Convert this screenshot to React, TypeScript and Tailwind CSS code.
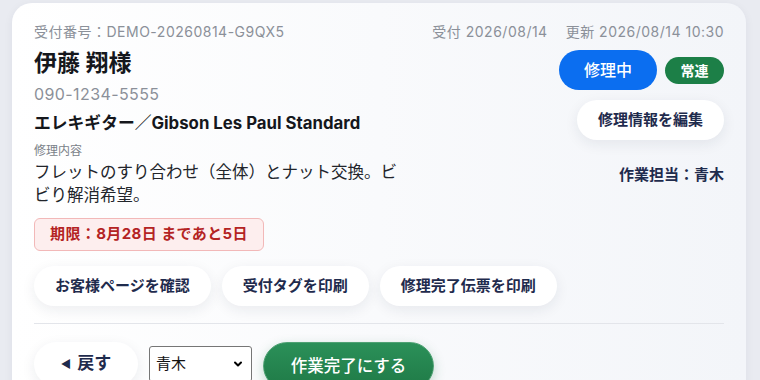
import { ChevronDown } from "lucide-react";

const font = { fontFamily: 'Inter, "Noto Sans CJK JP", sans-serif' };

function PillButton({ children }: { children: React.ReactNode }) {
  return (
    <button className="h-10 px-[21px] rounded-full bg-white text-[15px] font-semibold text-[#1f2b4d] shadow-[0_4px_14px_rgba(30,40,70,0.08)] whitespace-nowrap">
      {children}
    </button>
  );
}

export default function App() {
  return (
    <div className="min-h-screen bg-[#e9ebf1] pl-3 pr-[14px] pt-[3px]" style={font}>
      <div className="rounded-[20px] bg-gradient-to-r from-white to-[#f3f5f9] shadow-[0_2px_10px_rgba(30,40,70,0.06)] px-[22px] pt-5 pb-8">
        {/* meta row */}
        <div className="flex justify-between text-[14px] leading-[18px] tracking-[0.5px] text-[#8b9099]">
          <span>受付番号：DEMO-20260814-G9QX5</span>
          <div className="flex gap-[18px]">
            <span>受付 2026/08/14</span>
            <span>更新 2026/08/14 10:30</span>
          </div>
        </div>

        <div className="flex justify-between">
          {/* left column */}
          <div className="w-[372px] pt-2">
            <h1 className="text-[23px] leading-7 font-bold text-[#15171c]">伊藤 翔様</h1>
            <p className="mt-1.5 text-[16px] leading-[22px] tracking-[0.4px] text-[#8b9099]">090-1234-5555</p>
            <p className="mt-[7px] text-[16.8px] leading-[22px] font-bold text-[#15171c]">
              エレキギター／Gibson Les Paul Standard
            </p>
            <p className="mt-[9px] text-[12px] leading-4 text-[#7a7f88]">修理内容</p>
            <p className="mt-[2px] text-[16.5px] leading-[23px] text-[#22252b]">
              フレットのすり合わせ（全体）とナット交換。ビビり解消希望。
            </p>
            <div className="mt-[11px] inline-flex h-[33px] items-center rounded-md border border-[#f2b8b8] bg-[#fdeeee] px-[15px] text-[15px] tracking-[0.4px] font-bold text-[#b42323]">
              期限：8月28日 まであと5日
            </div>
          </div>

          {/* right column */}
          <div className="flex flex-col items-end pt-[9px]">
            <div className="flex items-center gap-2">
              <span className="flex h-10 w-[98px] items-center justify-center rounded-full bg-[#0b6ef0] text-[16px] font-medium text-white">
                修理中
              </span>
              <span className="flex h-[27px] w-[59px] items-center justify-center rounded-full bg-[#1c7f47] text-[14px] font-bold text-white">
                常連
              </span>
            </div>
            <div className="mt-2.5">
              <PillButton>修理情報を編集</PillButton>
            </div>
            <p className="mt-6 text-[15px] font-bold text-[#1f2b4d]">作業担当：青木</p>
          </div>
        </div>

        {/* action buttons */}
        <div className="mt-[15px] flex gap-[11px]">
          <PillButton>お客様ページを確認</PillButton>
          <PillButton>受付タグを印刷</PillButton>
          <PillButton>修理完了伝票を印刷</PillButton>
        </div>

        <div className="mt-[17px] border-t border-[#e3e5ea]" />

        {/* bottom row */}
        <div className="mt-[18px] flex items-start gap-[11px]">
          <button className="flex h-11 w-[104px] items-center justify-center gap-1.5 rounded-full bg-white text-[17px] font-semibold text-[#1f2b4d] shadow-[0_4px_14px_rgba(30,40,70,0.08)]">
            <span className="text-[11px]">◀</span>
            <span>戻す</span>
          </button>
          <div className="relative mt-1 w-[103px]">
            <select className="h-9 w-full appearance-none rounded-[3px] border border-[#767676] bg-white pl-1.5 text-[15px] text-[#111]">
              <option>青木</option>
            </select>
            <ChevronDown className="pointer-events-none absolute right-2 top-[12px] h-3 w-3 text-black" strokeWidth={4} />
          </div>
          <button className="h-12 w-[171px] rounded-full border border-[#4fa274] bg-gradient-to-b from-[#2b9059] to-[#1f7a46] text-[16.5px] font-medium text-white shadow-[0_4px_12px_rgba(30,120,70,0.25)]">
            作業完了にする
          </button>
        </div>
      </div>
    </div>
  );
}
